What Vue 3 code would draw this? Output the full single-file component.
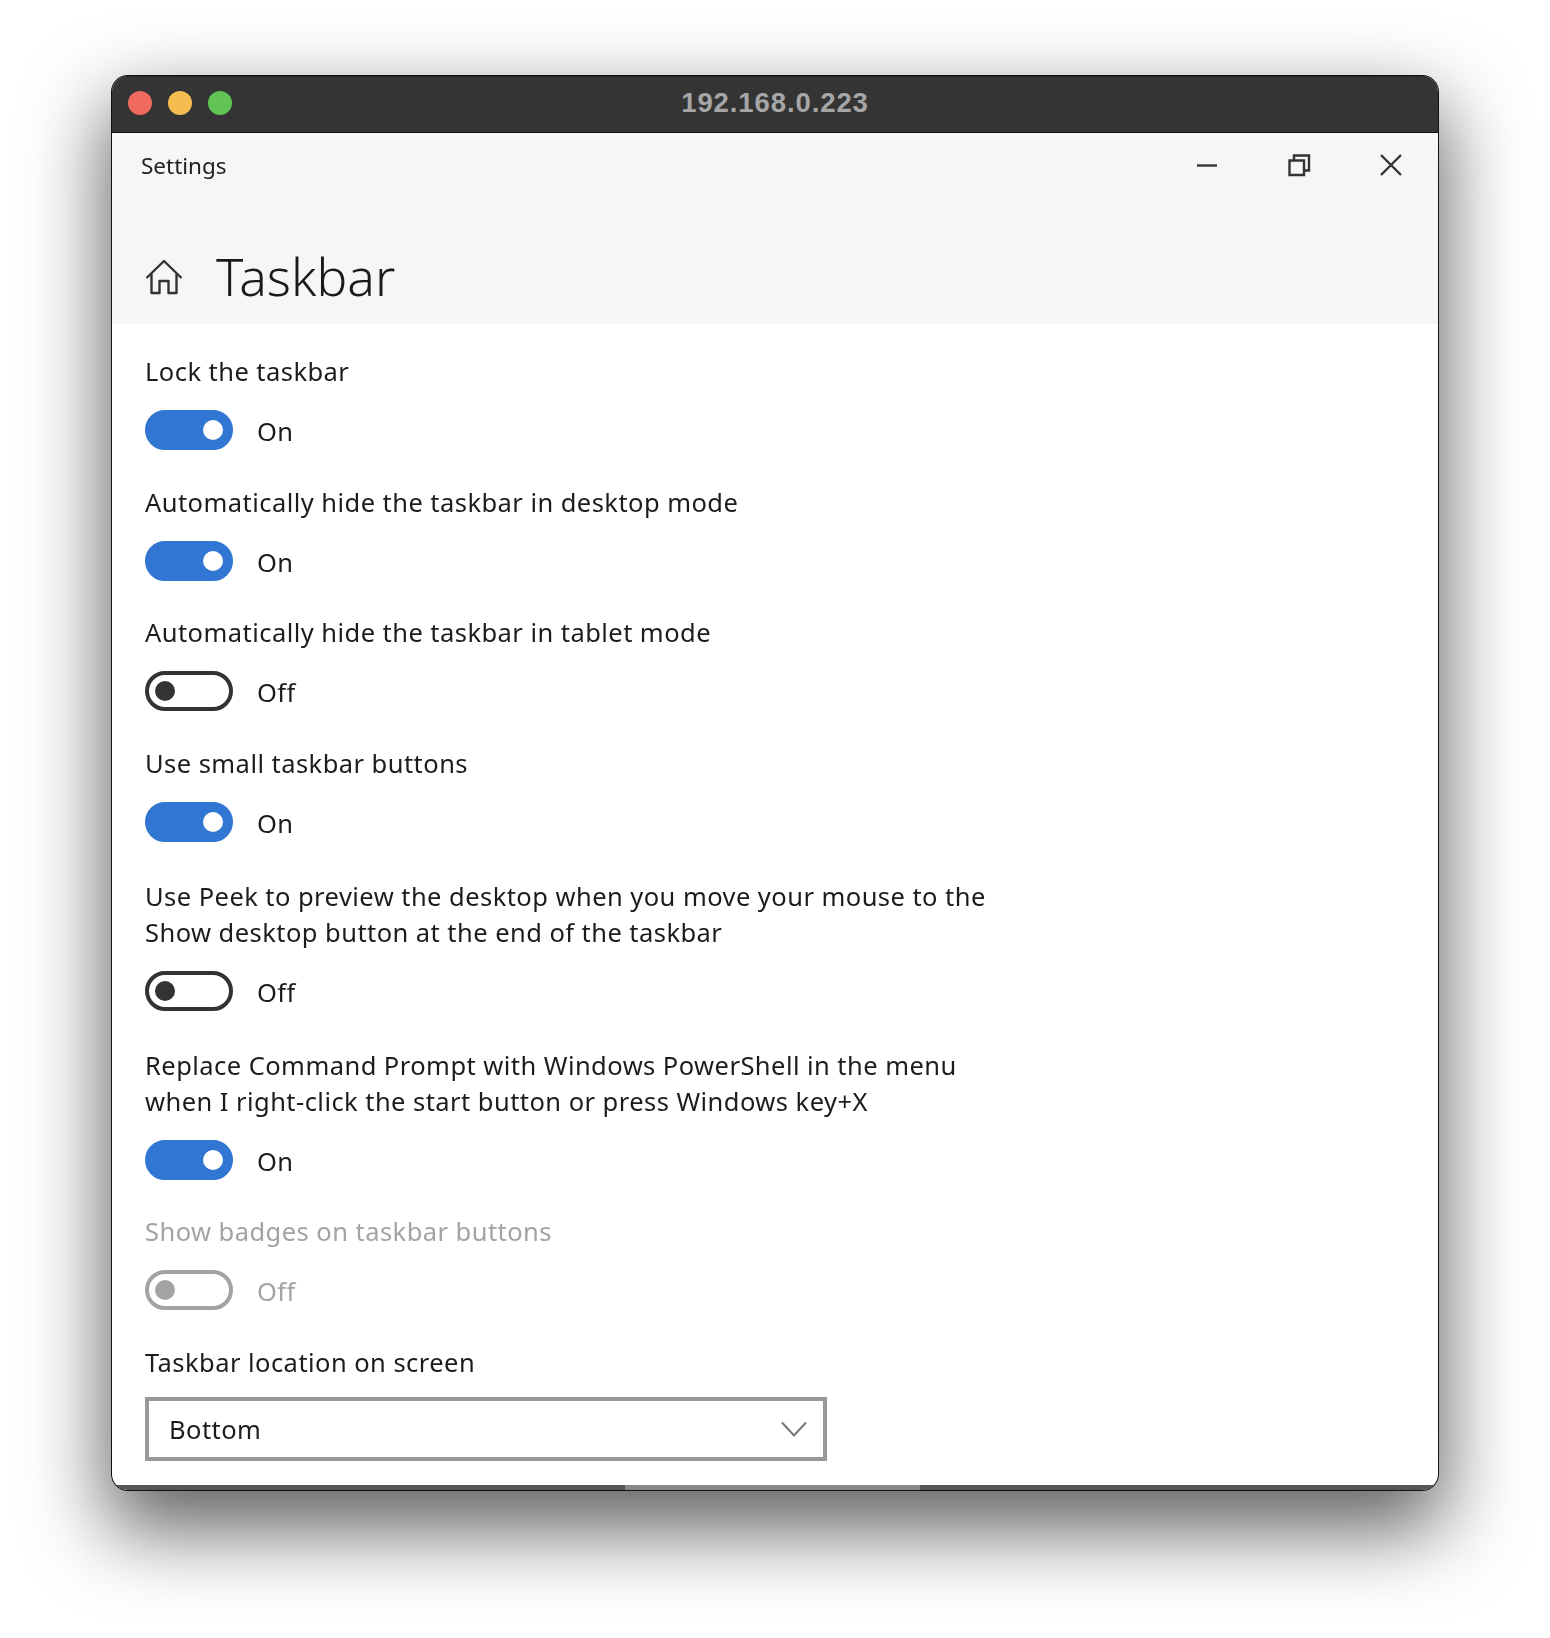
<script setup>
const rows = [
  { lines: ['Lock the taskbar'], on: true },
  { lines: ['Automatically hide the taskbar in desktop mode'], on: true },
  { lines: ['Automatically hide the taskbar in tablet mode'], on: false },
  { lines: ['Use small taskbar buttons'], on: true },
  { lines: ['Use Peek to preview the desktop when you move your mouse to the', 'Show desktop button at the end of the taskbar'], on: false },
  { lines: ['Replace Command Prompt with Windows PowerShell in the menu', 'when I right-click the start button or press Windows key+X'], on: true },
  { lines: ['Show badges on taskbar buttons'], on: false, disabled: true },
]
</script>

<template>
  <div class="page">
    <div class="window">
      <div class="titlebar">
        <div class="lights">
          <span class="light red"></span>
          <span class="light yellow"></span>
          <span class="light green"></span>
        </div>
        <div class="host">192.168.0.223</div>
      </div>
      <div class="head">
        <div class="head-top">
          <span class="app">Settings</span>
          <div class="caps">
            <svg class="cap" width="24" height="24" viewBox="0 0 24 24"><path d="M2 12.500h20" stroke="#333" stroke-width="2.400" fill="none"/></svg>
            <svg class="cap" width="24" height="24" viewBox="0 0 24 24"><path d="M2.500 7.500h14.500v14.500h-14.500zM7 7.500v-5h15v15h-5" stroke="#333" stroke-width="2.400" fill="none"/></svg>
            <svg class="cap" width="24" height="24" viewBox="0 0 24 24"><path d="M2 2l20 20M22 2L2 22" stroke="#333" stroke-width="2.400" fill="none"/></svg>
          </div>
        </div>
        <div class="head-main">
          <svg class="home" width="38" height="36" viewBox="0 0 38 36"><path d="M1.500 19L19 2l17.500 17M6.500 15v19h8V22h9v12h8V15" stroke="#333" stroke-width="2.400" fill="none" stroke-linejoin="round"/></svg>
          <h1 class="title">Taskbar</h1>
        </div>
      </div>
      <div class="content">
        <div v-for="(r, i) in rows" :key="i" class="row" :class="{ disabled: r.disabled, multi: r.lines.length > 1 }">
          <div class="label">
            <div v-for="l in r.lines" :key="l">{{ l }}</div>
          </div>
          <div class="toggle-line">
            <span class="toggle" :class="{ on: r.on }"><span class="knob"></span></span>
            <span class="state">{{ r.on ? 'On' : 'Off' }}</span>
          </div>
        </div>
        <div class="label">Taskbar location on screen</div>
        <div class="select">
          <span>Bottom</span>
          <svg width="26" height="16" viewBox="0 0 26 16"><path d="M1 1.500l12 13 12-13" stroke="#777" stroke-width="2" fill="none"/></svg>
        </div>
      </div>
      <div class="edge"><span class="edge-thumb"></span></div>
    </div>
  </div>
</template>

<style scoped>
.page {
  width: 1550px;
  height: 1638px;
  padding: 76px 112px 0 112px;
  box-sizing: border-box;
  background: #fff;
  font-family: "Noto Sans", "Open Sans", sans-serif;
  overflow: hidden;
}
.window {
  height: 1414px;
  border-radius: 16px;
  overflow: hidden;
  background: #fff;
  display: flex;
  flex-direction: column;
  box-shadow: 0 0 0 1px #111, 0 34px 80px 6px rgba(0, 0, 0, 0.62);
}
.titlebar {
  height: 57px;
  flex: none;
  background: #343434;
  position: relative;
  display: flex;
  align-items: center;
  justify-content: center;
  border-top: 1px solid #2a2a2a;
  border-bottom: 1px solid #111;
  box-sizing: border-box;
}
.lights {
  position: absolute;
  left: 16px;
  top: 14px;
  display: flex;
  gap: 16px;
}
.light {
  width: 24px;
  height: 24px;
  border-radius: 50%;
}
.red { background: #ee6a5f; }
.yellow { background: #f5bd4f; }
.green { background: #61c454; }
.host {
  color: #a6a6a6;
  font-family: "Liberation Sans", Arial, sans-serif;
  font-weight: 700;
  font-size: 27.500px;
  letter-spacing: 0.9px;
  margin-top: -3px;
}
.head {
  height: 191px;
  flex: none;
  background: #f6f6f6;
  display: flex;
  flex-direction: column;
  filter: blur(0.4px);
}
.head-top {
  display: flex;
  justify-content: space-between;
  align-items: flex-start;
  padding: 17px 35px 0 29px;
}
.app {
  font-size: 22.500px;
  color: #222;
}
.caps {
  display: flex;
  gap: 68px;
  margin-top: 3px;
}
.head-main {
  display: flex;
  align-items: center;
  gap: 33px;
  padding: 61px 0 0 33px;
}
.home {
  margin-top: 2px;
}
.title {
  margin: 0;
  font-size: 51.500px;
  font-weight: 300;
  color: #1a1a1a;
  line-height: 68px;
}
.content {
  flex: 1;
  padding: 29px 33px 0;
  filter: blur(0.4px);
}
.row {
  margin-bottom: 33.600px;
}
.row.multi {
  margin-top: 36px;
}
.label {
  font-size: 25.500px;
  letter-spacing: 0.45px;
  line-height: 36px;
  color: #1c1c1c;
}
.toggle-line {
  margin-top: 21px;
  display: flex;
  align-items: center;
  gap: 24px;
  height: 40px;
}
.toggle {
  width: 88px;
  height: 40px;
  box-sizing: border-box;
  border-radius: 20px;
  border: 4px solid #333;
  position: relative;
  display: block;
}
.knob {
  position: absolute;
  left: 6px;
  top: 6px;
  width: 20px;
  height: 20px;
  border-radius: 50%;
  background: #333;
}
.toggle.on {
  background: #3176d2;
  border-color: #3176d2;
}
.toggle.on .knob {
  left: auto;
  right: 6px;
  background: #fff;
}
.state {
  font-size: 25.500px;
  letter-spacing: 0.45px;
  padding-top: 2px;
  color: #1c1c1c;
}
.disabled .label,
.disabled .state { color: #a3a3a3; }
.disabled .toggle { border-color: #a3a3a3; }
.disabled .knob { background: #a3a3a3; }
.select {
  margin-top: 17px;
  width: 682px;
  height: 64px;
  box-sizing: border-box;
  border: 4px solid #999;
  display: flex;
  align-items: center;
  justify-content: space-between;
  padding: 0 16px 0 20px;
  font-size: 25.500px;
  letter-spacing: 0.45px;
  color: #1c1c1c;
}
.edge {
  height: 5px;
  flex: none;
  background: #555;
  position: relative;
}
.edge-thumb {
  position: absolute;
  left: 513px;
  width: 295px;
  top: 0;
  bottom: 0;
  background: #888;
}
</style>
